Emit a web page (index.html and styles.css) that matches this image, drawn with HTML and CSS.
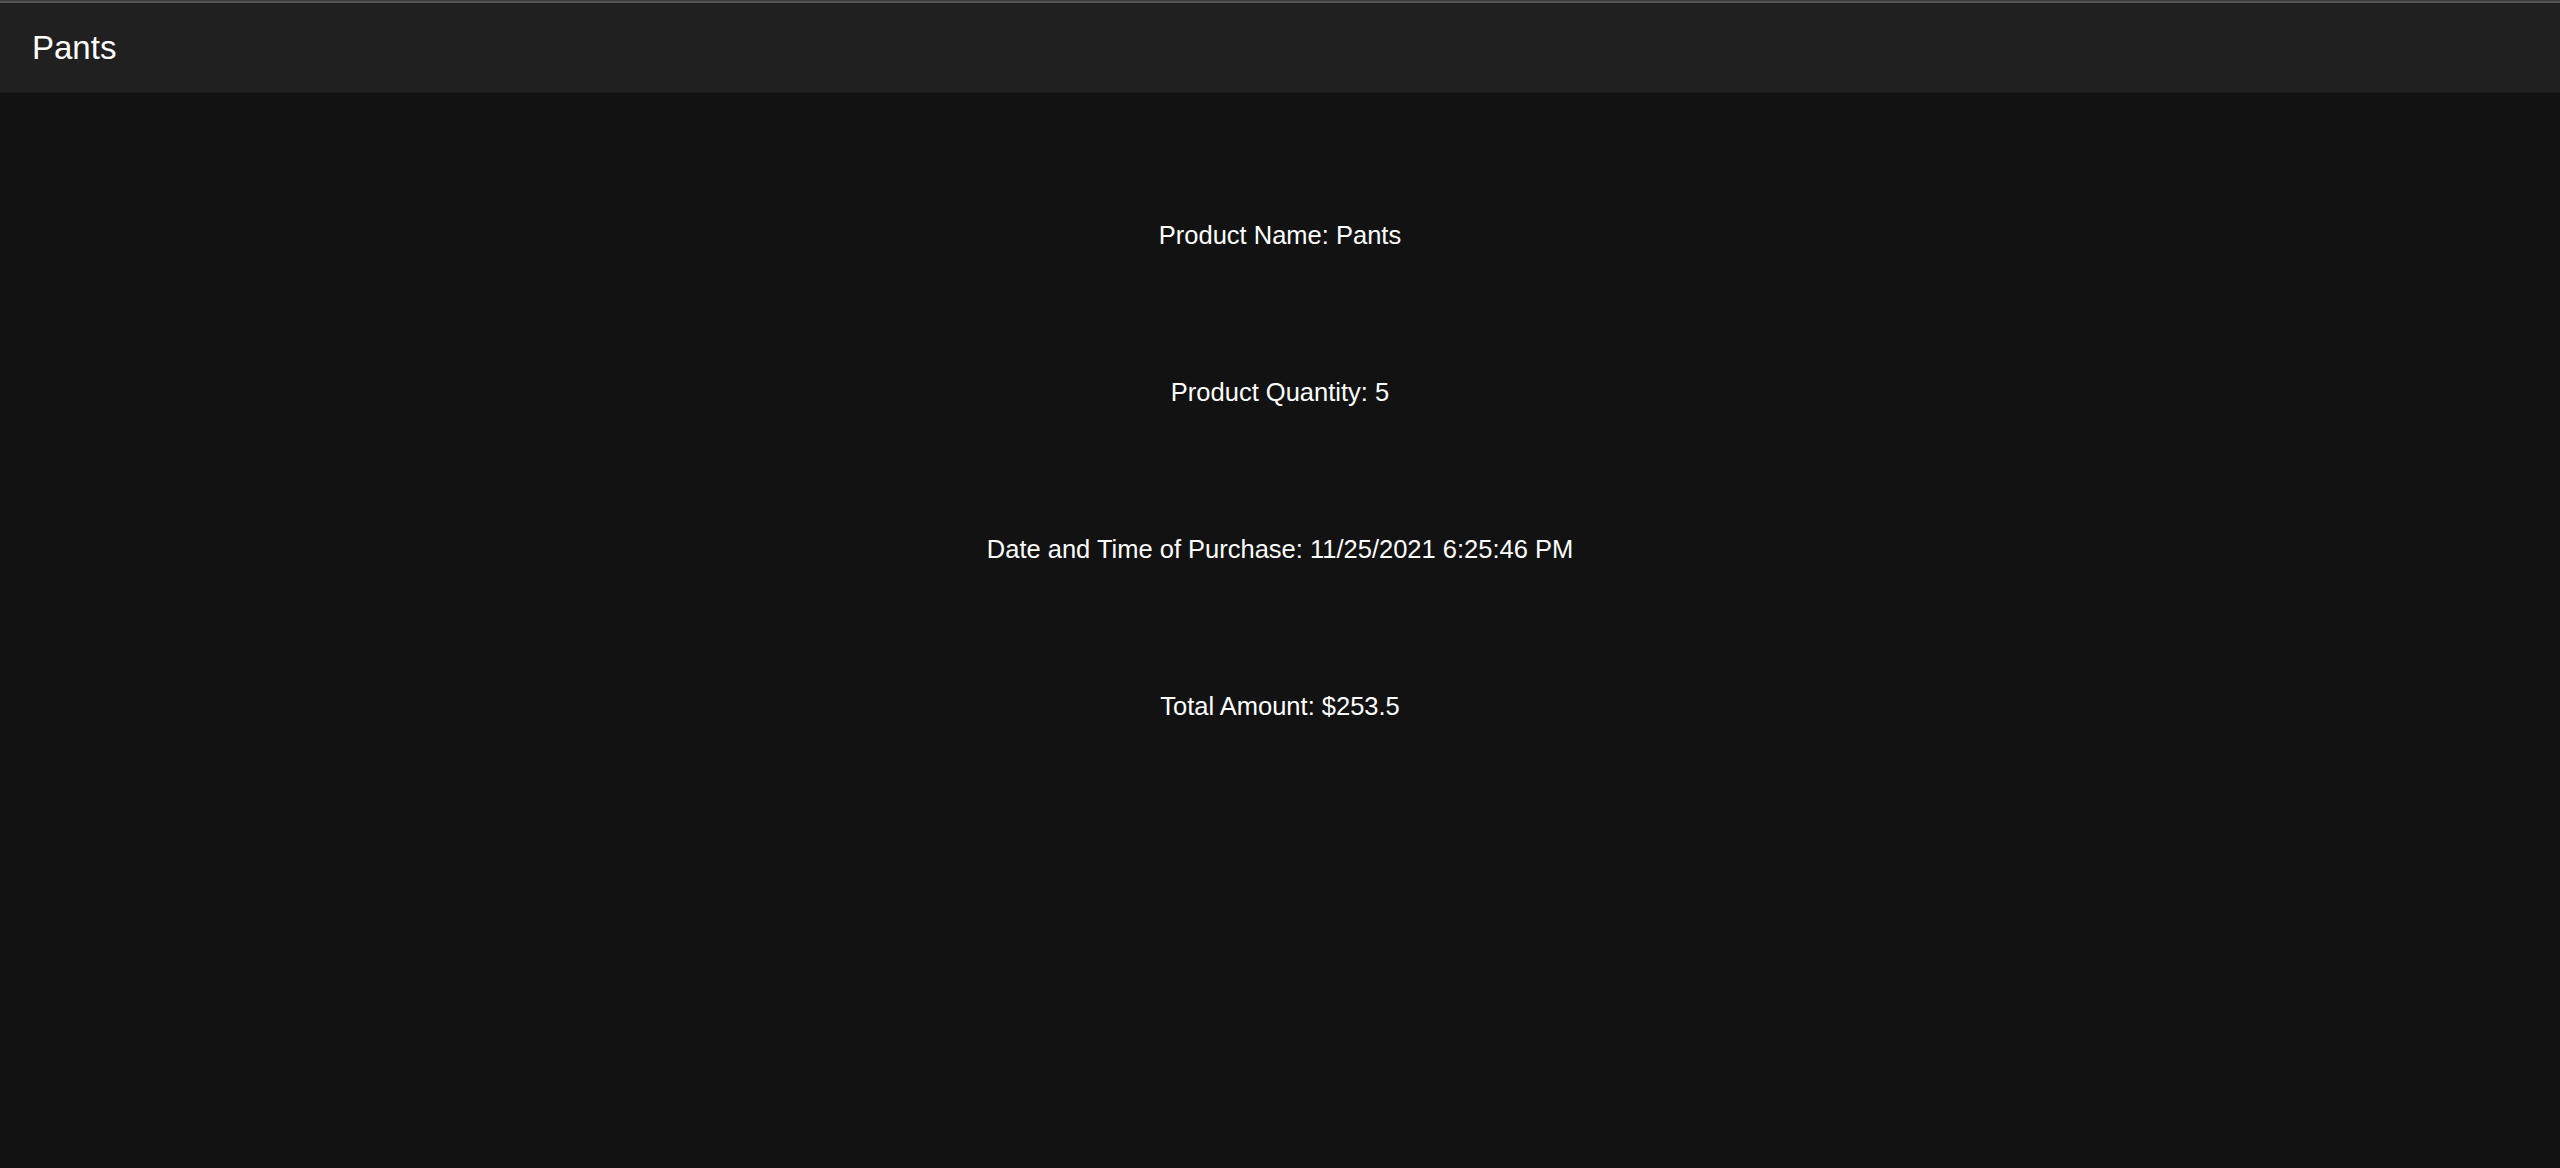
FILE: index.html
```html
<!DOCTYPE html>
<html>
<head>
<meta charset="utf-8">
<link rel="stylesheet" href="styles.css">
</head>
<body>
<div class="topline"></div>
<header class="appbar"><h1 class="title">Pants</h1></header>
<main class="details">
  <p class="row">Product Name: Pants</p>
  <p class="row">Product Quantity: 5</p>
  <p class="row">Date and Time of Purchase: 11/25/2021 6:25:46 PM</p>
  <p class="row">Total Amount: $253.5</p>
</main>
</body>
</html>
```
FILE: styles.css
```css
html, body {
  margin: 0;
  padding: 0;
  height: 100%;
  background: #121212;
  color: #ffffff;
  font-family: "Liberation Sans", Arial, sans-serif;
}
.topline {
  height: 3px;
  background: #555555;
  border-top: 1px solid #3a3a3a;
  box-sizing: border-box;
}
.appbar {
  height: 90px;
  background: #202020;
  border-bottom: 1px solid #1a1a1a;
  box-sizing: border-box;
  display: flex;
  align-items: center;
  padding-left: 32px;
}
.title {
  margin: 0;
  font-size: 33px;
  font-weight: 400;
}
.details {
  display: flex;
  flex-direction: column;
  align-items: center;
  gap: 127px;
  padding-top: 127px;
}
.row {
  margin: 0;
  font-size: 25.5px;
  line-height: 30px;
}
```
